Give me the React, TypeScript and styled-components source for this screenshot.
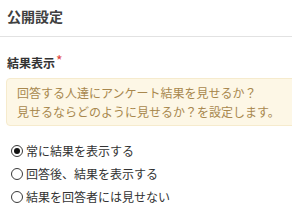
import React, { useState } from "react";
import styled, { createGlobalStyle } from "styled-components";

const Global = createGlobalStyle`
  html, body { margin: 0; padding: 0; background: #ffffff; }
  body { font-family: "Noto Sans CJK JP", "Noto Sans", sans-serif; color: #333; }
`;

const Page = styled.div`
  width: 292px;
  height: 224px;
  overflow: hidden;
  background: #fff;
`;

const Header = styled.div`
  padding: 6px 7px 10px;
  border-bottom: 1px solid #e2e2e2;
`;

const Title = styled.h2`
  margin: 0;
  font-size: 14px;
  line-height: 20px;
  font-weight: 700;
  color: #404040;
`;

const Body = styled.div`
  padding: 17px 0 0 7px;
`;

const Label = styled.div`
  font-size: 12px;
  line-height: 18px;
  font-weight: 700;
  color: #333;
  display: flex;
  align-items: flex-start;
`;

const Required = styled.span`
  color: #e0443e;
  font-size: 14px;
  line-height: 12px;
  margin-left: 1px;
  font-weight: 400;
`;

const Notice = styled.div`
  margin: 6px -8px 0 -1px;
  padding: 4px 10px;
  background: #fdf7e6;
  border: 1px solid #f6ebcd;
  border-radius: 4px;
  font-size: 12px;
  line-height: 19px;
  color: #a8884e;
  white-space: nowrap;
`;

const Options = styled.div`
  margin-top: 13px;
  display: flex;
  flex-direction: column;
`;

const Option = styled.label`
  display: flex;
  align-items: center;
  height: 23px;
  font-size: 12px;
  color: #333;
  cursor: pointer;
`;

const Radio = styled.span<{ $checked: boolean }>`
  box-sizing: border-box;
  width: 12px;
  height: 12px;
  border-radius: 50%;
  border: 1px solid #3a3a3a;
  margin: 0 3px 0 4px;
  display: inline-flex;
  align-items: center;
  justify-content: center;
  &::after {
    content: "";
    width: 6px;
    height: 6px;
    border-radius: 50%;
    background: #111;
    display: ${(p) => (p.$checked ? "block" : "none")};
  }
`;

const options = ["常に結果を表示する", "回答後、結果を表示する", "結果を回答者には見せない"];

export default function App() {
  const [sel, setSel] = useState(0);
  return (
    <Page>
      <Global />
      <Header>
        <Title>公開設定</Title>
      </Header>
      <Body>
        <Label>
          結果表示<Required>*</Required>
        </Label>
        <Notice>
          回答する人達にアンケート結果を見せるか？
          <br />
          見せるならどのように見せるか？を設定します。
        </Notice>
        <Options>
          {options.map((o, i) => (
            <Option key={o} onClick={() => setSel(i)}>
              <Radio $checked={sel === i} />
              {o}
            </Option>
          ))}
        </Options>
      </Body>
    </Page>
  );
}
